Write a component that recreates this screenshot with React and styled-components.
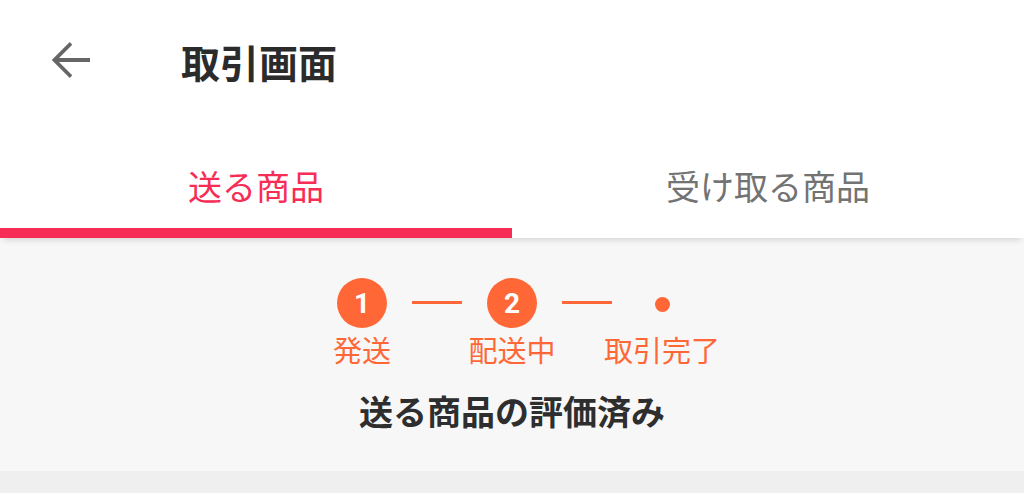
import React, { useState } from "react";
import styled, { createGlobalStyle } from "styled-components";

const GlobalStyle = createGlobalStyle`
  html, body {
    margin: 0;
    padding: 0;
    background: #efefef;
    font-family: "Noto Sans CJK JP", "Noto Sans", sans-serif;
  }
`;

const ORANGE = "#ff6836";
const PINK = "#f82d56";

const steps = [
  { label: "発送", num: 1 },
  { label: "配送中", num: 2 },
  { label: "取引完了", num: null },
];

const tabs = ["送る商品", "受け取る商品"];

export default function App() {
  const [active, setActive] = useState(0);

  return (
    <Page>
      <GlobalStyle />
      <Header>
        <BackButton aria-label="back">
          <svg width="60" height="60" viewBox="0 0 24 24">
            <path
              d="M20 11.2H7.6l5.3-5.3L11.9 4.8 4.7 12l7.2 7.2 1-1.1-5.3-5.3H20z"
              fill="#666"
            />
          </svg>
        </BackButton>
        <Title>取引画面</Title>
      </Header>

      <TabBar>
        {tabs.map((t, i) => (
          <Tab key={t} $active={i === active} onClick={() => setActive(i)}>
            {t}
          </Tab>
        ))}
      </TabBar>

      <Body>
        <Stepper>
          {steps.map((s, i) => (
            <React.Fragment key={s.label}>
              {i > 0 && <Connector />}
              <Step>
                <Marker>{s.num ? <Circle>{s.num}</Circle> : <Dot />}</Marker>
                <StepLabel>{s.label}</StepLabel>
              </Step>
            </React.Fragment>
          ))}
        </Stepper>
        <Status>送る商品の評価済み</Status>
      </Body>
    </Page>
  );
}

const Page = styled.div`
  width: 1024px;
  min-height: 493px;
  display: flex;
  flex-direction: column;
  background: #efefef;
`;

const Header = styled.header`
  height: 122px;
  display: flex;
  align-items: center;
  padding-left: 40px;
  background: #fff;
  box-sizing: border-box;
`;

const BackButton = styled.button`
  width: 60px;
  height: 60px;
  padding: 0;
  border: 0;
  background: none;
  display: flex;
  margin-top: -2px;
`;

const Title = styled.h1`
  margin: 0 0 0 81px;
  font-size: 39px;
  font-weight: 700;
  color: #2b2b2b;
  line-height: 1;
`;

const TabBar = styled.nav`
  display: flex;
  background: #fff;
  position: relative;
  z-index: 1;
  box-shadow: 0 5px 6px -3px rgba(0, 0, 0, 0.14);
`;

const Tab = styled.div`
  flex: 1;
  height: 116px;
  box-sizing: border-box;
  padding-top: 44px;
  text-align: center;
  font-size: 34px;
  line-height: 40px;
  color: ${(p) => (p.$active ? PINK : "#737373")};
  border-bottom: 10px solid ${(p) => (p.$active ? PINK : "transparent")};
  cursor: pointer;
`;

const Body = styled.section`
  background: #f7f7f7;
  height: 233px;
  display: flex;
  flex-direction: column;
  align-items: center;
  padding-top: 40px;
  box-sizing: border-box;
`;

const Stepper = styled.div`
  display: flex;
  align-items: flex-start;
`;

const Step = styled.div`
  width: 50px;
  display: flex;
  flex-direction: column;
  align-items: center;
`;

const Marker = styled.div`
  width: 50px;
  height: 50px;
  display: flex;
  align-items: center;
  justify-content: center;
`;

const Circle = styled.div`
  width: 50px;
  height: 50px;
  border-radius: 50%;
  background: ${ORANGE};
  color: #fff;
  font-family: Roboto, "Noto Sans", sans-serif;
  font-weight: 700;
  font-size: 28px;
  display: flex;
  align-items: center;
  justify-content: center;
`;

const Dot = styled.div`
  width: 15px;
  height: 15px;
  border-radius: 50%;
  background: ${ORANGE};
  margin-top: 2px;
`;

const Connector = styled.div`
  width: 50px;
  height: 3px;
  margin: 23px 25px 0;
  background: ${ORANGE};
`;

const StepLabel = styled.div`
  margin-top: 4px;
  white-space: nowrap;
  font-size: 29px;
  line-height: 34px;
  color: ${ORANGE};
`;

const Status = styled.div`
  margin-top: 23px;
  font-size: 34px;
  font-weight: 700;
  line-height: 44px;
  color: #2e2e2e;
`;
